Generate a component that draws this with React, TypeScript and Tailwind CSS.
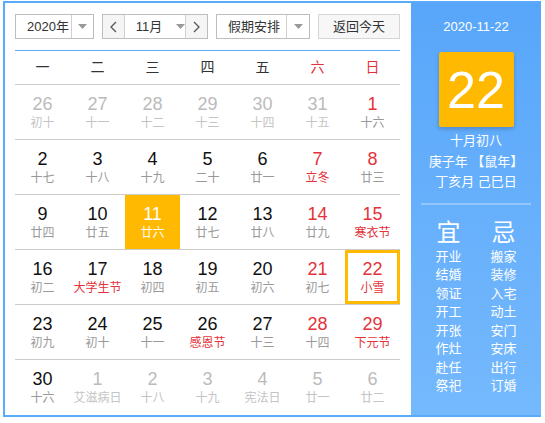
import React from "react";

type Day = { n: number; l: string; out?: boolean; redN?: boolean; redL?: boolean; sel?: boolean; today?: boolean };

const rows: Day[][] = [
  [
    { n: 26, l: "初十", out: true },
    { n: 27, l: "十一", out: true },
    { n: 28, l: "十二", out: true },
    { n: 29, l: "十三", out: true },
    { n: 30, l: "十四", out: true },
    { n: 31, l: "十五", out: true },
    { n: 1, l: "十六", redN: true },
  ],
  [
    { n: 2, l: "十七" },
    { n: 3, l: "十八" },
    { n: 4, l: "十九" },
    { n: 5, l: "二十" },
    { n: 6, l: "廿一" },
    { n: 7, l: "立冬", redN: true, redL: true },
    { n: 8, l: "廿三", redN: true },
  ],
  [
    { n: 9, l: "廿四" },
    { n: 10, l: "廿五" },
    { n: 11, l: "廿六", sel: true },
    { n: 12, l: "廿七" },
    { n: 13, l: "廿八" },
    { n: 14, l: "廿九", redN: true },
    { n: 15, l: "寒衣节", redN: true, redL: true },
  ],
  [
    { n: 16, l: "初二" },
    { n: 17, l: "大学生节", redL: true },
    { n: 18, l: "初四" },
    { n: 19, l: "初五" },
    { n: 20, l: "初六" },
    { n: 21, l: "初七", redN: true },
    { n: 22, l: "小雪", redN: true, redL: true, today: true },
  ],
  [
    { n: 23, l: "初九" },
    { n: 24, l: "初十" },
    { n: 25, l: "十一" },
    { n: 26, l: "感恩节", redL: true },
    { n: 27, l: "十三" },
    { n: 28, l: "十四", redN: true },
    { n: 29, l: "下元节", redN: true, redL: true },
  ],
  [
    { n: 30, l: "十六" },
    { n: 1, l: "艾滋病日", out: true },
    { n: 2, l: "十八", out: true },
    { n: 3, l: "十九", out: true },
    { n: 4, l: "宪法日", out: true },
    { n: 5, l: "廿一", out: true },
    { n: 6, l: "廿二", out: true },
  ],
];

const yi = ["开业", "结婚", "领证", "开工", "开张", "作灶", "赴任", "祭祀"];
const ji = ["搬家", "装修", "入宅", "动土", "安门", "安床", "出行", "订婚"];

const Tri = () => (
  <svg width="9" height="5" viewBox="0 0 9 5">
    <path d="M0 0 L9 0 L4.5 5 Z" fill="#999" />
  </svg>
);

const Chev = ({ right }: { right?: boolean }) => (
  <svg width="7" height="12" viewBox="0 0 7 12">
    <path d={right ? "M1 1 L6 6 L1 11" : "M6 1 L1 6 L6 11"} fill="none" stroke="#555" strokeWidth="1.3" />
  </svg>
);

function Cell({ d }: { d: Day }) {
  let numC = "text-[#111]";
  let lunC = "text-[#999]";
  if (d.out) {
    numC = "text-[#bbb]";
    lunC = "text-[#c4c4c4]";
  }
  if (d.redN) numC = "text-[#e5323a]";
  if (d.redL) lunC = "text-[#e5323a]";
  if (d.sel) {
    numC = "text-white";
    lunC = "text-white";
  }
  return (
    <div
      className={
        "flex flex-col items-center h-full box-border " +
        (d.sel ? "bg-[#ffb900] " : "") +
        (d.today ? "border-[3px] border-[#ffb900] pt-[6px]" : "pt-[9px]")
      }
    >
      <div className={"text-[18px] leading-[20px] " + numC}>{d.n}</div>
      <div className={"text-[12px] leading-[16px] mt-[1px] whitespace-nowrap " + lunC}>{d.l}</div>
    </div>
  );
}

export default function App() {
  return (
    <div
      className="ml-[3px] mt-[1px] w-[538px] h-[416px] border-2 border-r-0 border-[#5aabf9] flex bg-white"
      style={{ fontFamily: '"Liberation Sans", "Noto Sans CJK SC", sans-serif' }}
    >
      <div className="w-[406px] pl-[10px] pt-[11px]">
        {/* controls */}
        <div className="flex h-[25px] text-[13px] text-[#333] whitespace-nowrap">
          <div className="w-[79px] h-full border border-[#bdbdbd] flex">
            <div className="w-[55px] flex items-center pl-[11px] whitespace-nowrap">2020年</div>
            <div className="flex-1 border-l border-[#d0d0d0] flex items-center justify-center">
              <Tri />
            </div>
          </div>
          <div className="ml-[8px] w-[106px] h-full border border-[#bdbdbd] flex">
            <div className="w-[22px] bg-[#f5f5f5] border-r border-[#d0d0d0] flex items-center justify-center">
              <Chev />
            </div>
            <div className="flex-1 flex items-center pl-[11px] whitespace-nowrap">
              <span>11月</span>
              <span className="ml-[14px] flex items-center">
                <Tri />
              </span>
            </div>
            <div className="w-[22px] bg-[#f5f5f5] border-l border-[#d0d0d0] flex items-center justify-center">
              <Chev right />
            </div>
          </div>
          <div className="ml-[8px] w-[94px] h-full border border-[#bdbdbd] flex">
            <div className="w-[69px] flex items-center pl-[11px] whitespace-nowrap">假期安排</div>
            <div className="flex-1 border-l border-[#d0d0d0] flex items-center justify-center">
              <Tri />
            </div>
          </div>
          <div className="ml-[8px] w-[82px] h-full border border-[#d6d6d6] bg-[#f7f7f7] flex items-center justify-center">
            返回今天
          </div>
        </div>
        <div className="mt-[11px] w-[385px] h-px bg-[#5aabf9]" />
        {/* weekday header */}
        <div className="w-[385px] h-[34px] border-b border-[#cccccc] grid grid-cols-7 text-[14px]">
          {["一", "二", "三", "四", "五", "六", "日"].map((w, i) => (
            <div key={w} className={"flex items-center justify-center " + (i >= 5 ? "text-[#e5323a]" : "text-[#333]")}>
              {w}
            </div>
          ))}
        </div>
        {rows.map((r, ri) => (
          <div
            key={ri}
            className={"w-[385px] grid grid-cols-7 " + (ri < 5 ? "h-[55px] border-b border-[#cccccc]" : "h-[55px]")}
          >
            {r.map((d, di) => (
              <Cell key={di} d={d} />
            ))}
          </div>
        ))}
      </div>
      {/* right panel */}
      <div className="w-[130px] h-full bg-gradient-to-b from-[#58a6fa] to-[#75b9fd] flex flex-col items-center text-white pt-[14px]">
        <div className="text-[13px] leading-[20px]">2020-11-22</div>
        <div className="mt-[15px] w-[75px] h-[75px] bg-[#ffb900] rounded-[2px] shadow-[0_2px_4px_rgba(0,0,0,0.2)] flex items-center justify-center text-[52px] leading-none">
          22
        </div>
        <div className="mt-[4px] text-[13px] leading-[20.5px] text-center whitespace-nowrap">
          <div>十月初八</div>
          <div>庚子年 【鼠年】</div>
          <div>丁亥月 己巳日</div>
        </div>
        <div className="mt-[10px] w-[110px] h-[2px] bg-white/30" />
        <div className="mt-[13px] grid grid-cols-[55px_55px] text-center">
          <div className="text-[24px] leading-[30px]">宜</div>
          <div className="text-[24px] leading-[30px]">忌</div>
          <div className="text-[13px] leading-[18.5px]">
            {yi.map((t) => (
              <div key={t}>{t}</div>
            ))}
          </div>
          <div className="text-[13px] leading-[18.5px]">
            {ji.map((t) => (
              <div key={t}>{t}</div>
            ))}
          </div>
        </div>
      </div>
    </div>
  );
}
